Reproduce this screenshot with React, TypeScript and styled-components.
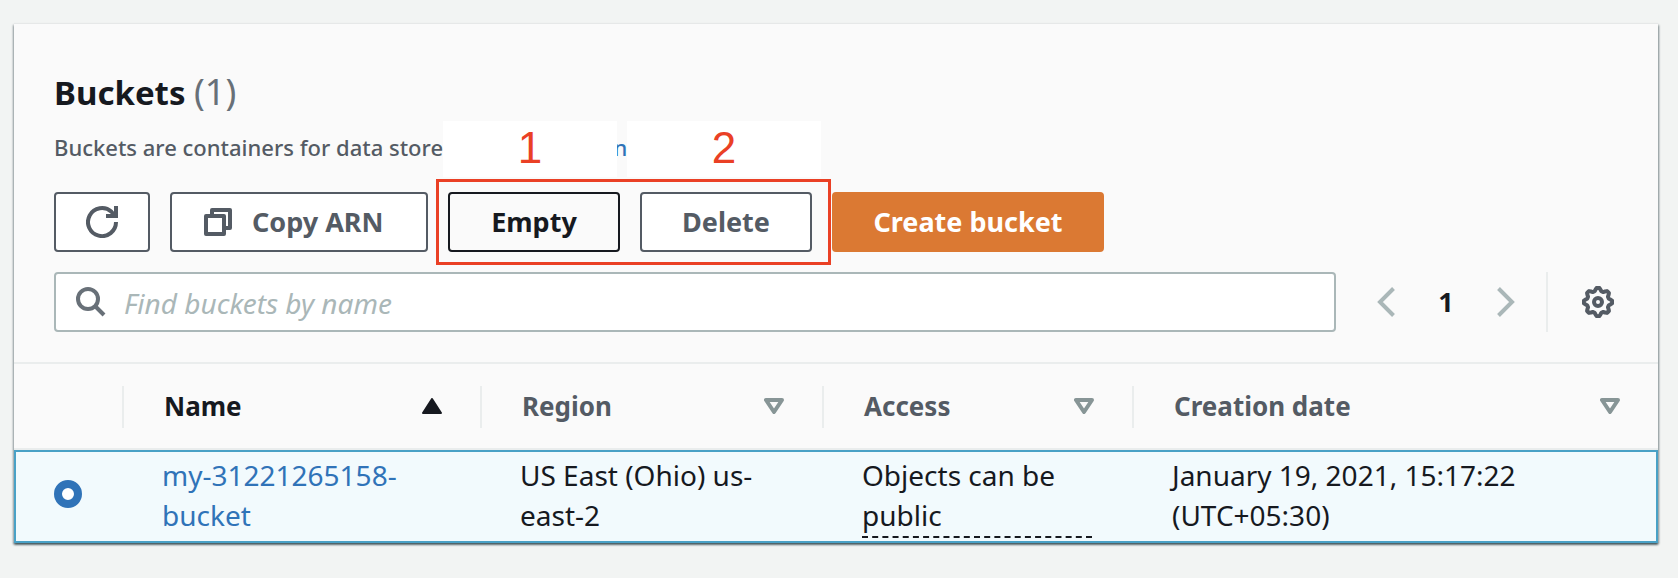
import React from 'react';
import styled, { createGlobalStyle } from 'styled-components';

const GlobalStyle = createGlobalStyle`
  *, *::before, *::after { box-sizing: border-box; }
  body {
    margin: 0;
    background: #f2f4f3;
    color: #16191f;
    font-family: "Noto Sans", "Open Sans", sans-serif;
    font-size: 28px;
    line-height: 40px;
  }
  button, input { font: inherit; color: inherit; }
`;

const Page = styled.main`
  padding: 24px 20px 34px 14px;
`;

const Card = styled.section`
  background: #fafafa;
  box-shadow: 0 -1px 1px #e6e8e8, 0 2px 2px rgba(0, 28, 36, 0.45), 1px 1px 2px rgba(0, 28, 36, 0.4),
    -1px 1px 2px rgba(0, 28, 36, 0.3);
`;

const CardHeader = styled.header`
  padding: 43px 40px 30px;
  border-bottom: 2px solid #eaeded;
`;

const Title = styled.h1`
  margin: 0;
  font-size: 33px;
  line-height: 50px;
  font-weight: 700;
`;

const Count = styled.span`
  font-size: 36px;
  font-weight: 400;
  color: #687078;
`;

const Description = styled.p`
  margin: 8px 0 24px;
  font-size: 22px;
  line-height: 42px;
  font-weight: 500;
  color: #545b64;
  white-space: nowrap;
`;

const TextLink = styled.a`
  color: #3073b8;
  text-decoration: none;
`;

const LearnLink = styled(TextLink)`
  margin-left: 43px;
`;

const Actions = styled.div`
  display: flex;
  gap: 20px;
  margin-bottom: 20px;
`;

const Button = styled.button<{ $tone?: 'normal' | 'hover' | 'primary'; $width: number }>`
  display: flex;
  align-items: center;
  justify-content: center;
  width: ${(p) => p.$width}px;
  height: 60px;
  padding: 0;
  border: 2px solid
    ${(p) => (p.$tone === 'primary' ? '#db7933' : p.$tone === 'hover' ? '#16191f' : '#545b64')};
  border-radius: 4px;
  background: ${(p) => (p.$tone === 'primary' ? '#db7933' : p.$tone === 'hover' ? '#fafafa' : '#fff')};
  color: ${(p) => (p.$tone === 'primary' ? '#fff' : p.$tone === 'hover' ? '#16191f' : '#545b64')};
  font-size: 27px;
  font-weight: 700;
  white-space: nowrap;
`;

const CopyButton = styled(Button)`
  justify-content: flex-start;
  gap: 20px;
  padding-left: 32px;
`;

const Marked = styled.div`
  position: relative;
  display: flex;
  gap: 20px;
`;

const MarkFrame = styled.div`
  position: absolute;
  inset: -13px -19px -13px -12px;
  border: 3px solid #ea4025;
  pointer-events: none;
`;

const MarkLabel = styled.div<{ $left: number; $width: number }>`
  position: absolute;
  top: -71px;
  left: ${(p) => p.$left}px;
  width: ${(p) => p.$width}px;
  height: 56px;
  background: #fff;
  color: #ea4025;
  font-family: "Liberation Sans", Arial, sans-serif;
  font-size: 44px;
  line-height: 54px;
  text-align: center;
`;

const FilterRow = styled.div`
  display: flex;
  align-items: center;
`;

const SearchBox = styled.label`
  display: flex;
  flex: 1;
  align-items: center;
  gap: 18px;
  height: 60px;
  padding: 0 20px;
  border: 2px solid #aab7b8;
  border-radius: 4px;
  background: #fff;
`;

const SearchInput = styled.input`
  flex: 1;
  min-width: 0;
  padding: 2px 0 0;
  border: 0;
  outline: 0;
  background: none;
  &::placeholder {
    color: #aab7b8;
    font-style: italic;
    opacity: 1;
  }
`;

const Pager = styled.nav`
  display: flex;
  align-items: center;
  justify-content: space-between;
  width: 138px;
  margin: 0 31px 0 41px;
`;

const IconButton = styled.button`
  display: flex;
  padding: 0;
  border: 0;
  background: none;
`;

const CurrentPage = styled.span`
  font-size: 27px;
  font-weight: 700;
`;

const Settings = styled.div`
  display: flex;
  align-items: center;
  height: 60px;
  padding: 0 4px 0 34px;
  border-left: 2px solid #eaeded;
`;

const Table = styled.table`
  width: 100%;
  border-collapse: separate;
  border-spacing: 0;
  table-layout: fixed;
`;

const Column = styled.col<{ $width?: number }>`
  width: ${(p) => (p.$width ? `${p.$width}px` : 'auto')};
`;

const HeadCell = styled.th`
  padding: 22px 0 20px;
  border-bottom: 2px solid #eaeded;
  text-align: left;
`;

const HeadInner = styled.div<{ $active?: boolean; $last?: boolean }>`
  display: flex;
  align-items: center;
  justify-content: space-between;
  height: 42px;
  padding: 0 38px 2px 40px;
  border-right: ${(p) => (p.$last ? '0' : '2px solid #eaeded')};
  color: ${(p) => (p.$active ? '#16191f' : '#545b64')};
  font-size: 26px;
  font-weight: 700;
`;

const Cell = styled.td`
  padding: 3px 42px 6px 38px;
  border: solid #49a1c6;
  border-width: 2px 0;
  background: #f2fafd;
  vertical-align: top;
  &:first-child { border-left-width: 2px; }
  &:last-child { border-right-width: 2px; }
`;

const RadioCell = styled(Cell)`
  padding: 0 0 6px 38px;
  vertical-align: middle;
`;

const Radio = styled.input`
  appearance: none;
  display: block;
  width: 28px;
  height: 28px;
  margin: 0;
  border: 8px solid #3073b8;
  border-radius: 50%;
  background: #fff;
`;

const DashedText = styled.div`
  margin-bottom: -4px;
  padding-bottom: 1px;
  border-bottom: 2px dashed #16191f;
`;

const RefreshIcon = () => (
  <svg width="32" height="32" viewBox="0 0 32 32" fill="none" stroke="currentColor" strokeWidth="4" aria-hidden="true">
    <path d="M30 16A14 14 0 1 1 25.5 5.8L29 10" />
    <path d="M30 0V10H20" />
  </svg>
);

const CopyIcon = () => (
  <svg width="28" height="28" viewBox="0 0 28 28" fill="none" stroke="currentColor" strokeWidth="4" strokeLinejoin="round" aria-hidden="true">
    <path d="M2 8H20V26H2Z" />
    <path d="M8 8V2H26V20H20" />
  </svg>
);

const SearchIcon = () => (
  <svg width="30" height="30" viewBox="0 0 30 30" fill="none" stroke="#687078" strokeWidth="4" aria-hidden="true">
    <circle cx="12" cy="12" r="10" />
    <path d="M19 19L28 28" />
  </svg>
);

const Chevron = ({ next }: { next?: boolean }) => (
  <svg width="18" height="32" viewBox="0 0 18 32" fill="none" stroke="#aab7b8" strokeWidth="4" aria-hidden="true">
    <path d={next ? 'M1.5 2.5L15 16L1.5 29.5' : 'M16.5 2.5L3 16L16.5 29.5'} />
  </svg>
);

const gearPath = Array.from({ length: 64 }, (_, i) => {
  const angle = (i / 64) * Math.PI * 2;
  const radius = 12.7 + 1.5 * Math.tanh(2.4 * Math.cos(8 * angle));
  return `${i ? 'L' : 'M'}${(16 + radius * Math.cos(angle)).toFixed(2)} ${(16 + radius * Math.sin(angle)).toFixed(2)}`;
}).join('') + 'Z';

const GearIcon = () => (
  <svg width="32" height="32" viewBox="0 0 32 32" fill="none" stroke="#545b64" strokeWidth="4" strokeLinejoin="round" aria-hidden="true">
    <path d={gearPath} />
    <circle cx="16" cy="16" r="4" />
  </svg>
);

const SortIcon = ({ ascending }: { ascending?: boolean }) => (
  <svg width="20" height="16" viewBox="0 0 20 16" strokeLinejoin="round" strokeWidth={ascending ? 2 : 4} aria-hidden="true">
    {ascending ? (
      <path d="M10 1L19 15H1Z" fill="#16191f" stroke="#16191f" />
    ) : (
      <path d="M2 2H18L10 14Z" fill="none" stroke="#879596" />
    )}
  </svg>
);

const columns = ['Name', 'Region', 'Access', 'Creation date'];

export default function App() {
  return (
    <>
      <GlobalStyle />
      <Page>
        <Card>
          <CardHeader>
            <Title>
              Buckets <Count>(1)</Count>
            </Title>
            <Description>
              Buckets are containers for data stored in S3. <LearnLink href="#learn">Learn more</LearnLink>
            </Description>
            <Actions>
              <Button $width={96} aria-label="Refresh">
                <RefreshIcon />
              </Button>
              <CopyButton $width={258}>
                <CopyIcon />
                Copy ARN
              </CopyButton>
              <Marked>
                <Button $width={172} $tone="hover">Empty</Button>
                <Button $width={172}>Delete</Button>
                <MarkLabel $left={-5} $width={174}>1</MarkLabel>
                <MarkLabel $left={179} $width={194}>2</MarkLabel>
                <MarkFrame />
              </Marked>
              <Button $width={272} $tone="primary">Create bucket</Button>
            </Actions>
            <FilterRow>
              <SearchBox>
                <SearchIcon />
                <SearchInput type="text" aria-label="Find buckets by name" placeholder="Find buckets by name" />
              </SearchBox>
              <Pager aria-label="Pages">
                <IconButton aria-label="Previous page"><Chevron /></IconButton>
                <CurrentPage>1</CurrentPage>
                <IconButton aria-label="Next page"><Chevron next /></IconButton>
              </Pager>
              <Settings>
                <IconButton aria-label="Preferences"><GearIcon /></IconButton>
              </Settings>
            </FilterRow>
          </CardHeader>
          <Table>
            <colgroup>
              <Column $width={110} />
              <Column $width={358} />
              <Column $width={342} />
              <Column $width={310} />
              <Column />
            </colgroup>
            <thead>
              <tr>
                <HeadCell aria-label="Selection"><HeadInner /></HeadCell>
                {columns.map((name, i) => (
                  <HeadCell key={name} scope="col">
                    <HeadInner $active={i === 0} $last={i === columns.length - 1}>
                      {name}
                      <SortIcon ascending={i === 0} />
                    </HeadInner>
                  </HeadCell>
                ))}
              </tr>
            </thead>
            <tbody>
              <tr>
                <RadioCell>
                  <Radio type="radio" name="bucket" aria-label="my-31221265158-bucket" defaultChecked />
                </RadioCell>
                <Cell><TextLink href="#bucket">my-31221265158-bucket</TextLink></Cell>
                <Cell>US East (Ohio) us-east-2</Cell>
                <Cell><DashedText>Objects can be public</DashedText></Cell>
                <Cell>January 19, 2021, 15:17:22 (UTC+05:30)</Cell>
              </tr>
            </tbody>
          </Table>
        </Card>
      </Page>
    </>
  );
}
